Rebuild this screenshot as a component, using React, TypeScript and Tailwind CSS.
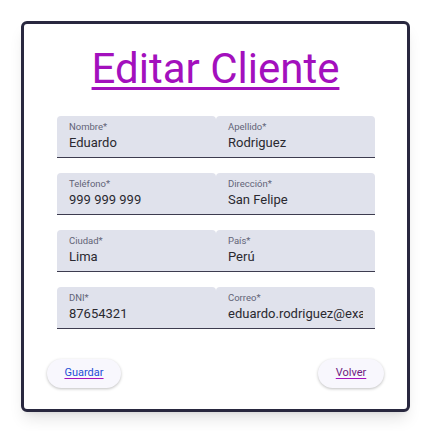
import React from 'react';

interface Field {
    label: string;
    value: string;
}

const rows: Field[][] = [
    [
        { label: 'Nombre*', value: 'Eduardo' },
        { label: 'Apellido*', value: 'Rodriguez' },
    ],
    [
        { label: 'Teléfono*', value: '999 999 999' },
        { label: 'Dirección*', value: 'San Felipe' },
    ],
    [
        { label: 'Ciudad*', value: 'Lima' },
        { label: 'País*', value: 'Perú' },
    ],
    [
        { label: 'DNI*', value: '87654321' },
        { label: 'Correo*', value: 'eduardo.rodriguez@example.com' },
    ],
];

function FilledField({ label, value }: Field) {
    return (
        <div className="flex flex-col rounded-t-[4px] bg-[#e0e2ec] border-b border-[#3d3c4f] px-3 pt-[5px] pb-[6px] min-w-0">
            <span className="text-[9.5px] leading-[11px] font-normal text-[#626477]">{label}</span>
            <input
                readOnly
                value={value}
                className="mt-[3px] w-full bg-transparent text-[13px] leading-[16px] font-normal text-[#2a2930] outline-none"
            />
        </div>
    );
}

export default function App() {
    return (
        <div className="min-h-[431px] bg-white font-['Roboto',sans-serif] pt-[21px] pl-[21px]">
            <div className="w-[389px] h-[391px] rounded-[6px] border-[3px] border-[#29283f] bg-white shadow-lg flex flex-col">
                <h1 className="mt-[23px] text-center text-[42px] leading-[44px] text-[#a310bd] underline decoration-[3px] underline-offset-[4px]">
                    Editar Cliente
                </h1>
                <div className="mt-[25px] ml-[33px] mr-[32px] flex flex-col gap-[15px]">
                    {rows.map((row, i) => (
                        <div key={i} className="grid grid-cols-2">
                            {row.map((f) => (
                                <FilledField key={f.label} label={f.label} value={f.value} />
                            ))}
                        </div>
                    ))}
                </div>
                <div className="mt-auto mb-[21px] mx-[23px] flex justify-between items-center">
                    <button className="h-[29px] w-[74px] rounded-full bg-[#f8f7fd] shadow-[0_1px_3px_rgba(0,0,0,0.25)] text-[11px] text-[#1f4fd6] underline decoration-[#a310bd] underline-offset-2">
                        Guardar
                    </button>
                    <button className="h-[29px] w-[66px] rounded-full bg-[#f8f7fd] shadow-[0_1px_3px_rgba(0,0,0,0.25)] text-[11px] text-[#6e1c7f] underline decoration-[#a310bd] underline-offset-2">
                        Volver
                    </button>
                </div>
            </div>
        </div>
    );
}
